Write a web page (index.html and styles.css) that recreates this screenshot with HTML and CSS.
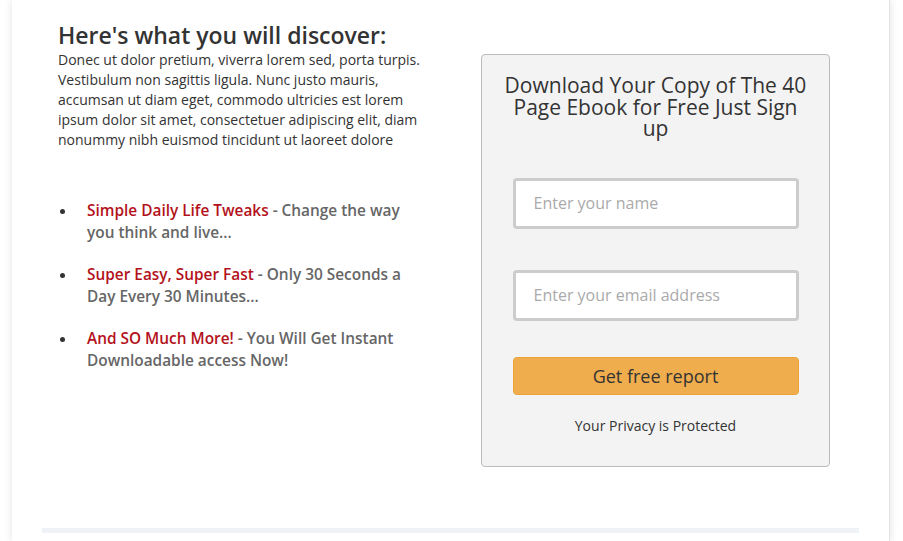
FILE: index.html
```html
<!DOCTYPE html>
<html>
<head>
<meta charset="utf-8">
<link rel="stylesheet" href="styles.css">
</head>
<body>
<div class="page">
  <div class="row">
    <div class="col-left">
      <h2 class="title">Here's what you will discover:</h2>
      <p class="intro">Donec ut dolor pretium, viverra lorem sed, porta turpis. Vestibulum non sagittis ligula. Nunc justo mauris, accumsan ut diam eget, commodo ultricies est lorem ipsum dolor sit amet, consectetuer adipiscing elit, diam nonummy nibh euismod tincidunt ut laoreet dolore</p>
      <ul class="points">
        <li><span class="dot"></span><span class="txt"><span class="hl">Simple Daily Life Tweaks</span> - Change the way you think and live...</span></li>
        <li><span class="dot"></span><span class="txt"><span class="hl">Super Easy, Super Fast</span> - Only 30 Seconds a Day Every 30 Minutes...</span></li>
        <li><span class="dot"></span><span class="txt"><span class="hl">And SO Much More!</span> - You Will Get Instant Downloadable access Now!</span></li>
      </ul>
    </div>
    <div class="optin">
      <h3 class="optin-title">Download Your Copy of The 40 Page Ebook for Free Just Sign up</h3>
      <form class="form">
        <input class="field" type="text" placeholder="Enter your name">
        <input class="field" type="email" placeholder="Enter your email address">
        <button class="btn" type="button">Get free report</button>
      </form>
      <p class="privacy">Your Privacy is Protected</p>
    </div>
  </div>
  <div class="bar"></div>
</div>
</body>
</html>
```
FILE: styles.css
```css
html, body {
  margin: 0;
  padding: 0;
  background: #fff;
}
body {
  font-family: "Open Sans", "Liberation Sans", sans-serif;
  color: #333;
}
.page {
  margin: 0 13px 0 12px;
  min-height: 541px;
  background: #fff;
  box-shadow: 0 0 8px rgba(0, 0, 0, 0.12);
  border-right: 1px solid #e4e4e4;
  box-sizing: border-box;
  padding-top: 21px;
  overflow: hidden;
}
.row {
  display: flex;
  align-items: flex-start;
}
.col-left {
  margin-left: 46px;
  width: 372px;
}
.title {
  margin: 0;
  font-size: 23px;
  font-weight: 600;
  line-height: 29px;
  color: #333;
}
.intro {
  margin: 0;
  font-size: 14px;
  line-height: 20px;
  color: #333;
}
.points {
  margin: 50px 0 0 0;
  padding: 0;
  list-style: none;
}
.points li {
  display: flex;
  align-items: flex-start;
  margin-bottom: 20px;
}
.dot {
  flex: none;
  width: 5px;
  height: 5px;
  border-radius: 50%;
  background: #333;
  margin: 9px 22px 0 2px;
}
.txt {
  font-size: 15.4px;
  font-weight: 600;
  line-height: 22px;
  color: #666;
}
.hl {
  color: #b3121b;
}
.optin {
  margin-left: 51px;
  margin-top: 33px;
  width: 349px;
  height: 413px;
  box-sizing: border-box;
  background: #f3f3f3;
  border: 1px solid #bbb;
  border-radius: 4px;
  padding: 20px 20px 0;
}
.optin-title {
  margin: 0;
  font-size: 21px;
  font-weight: 400;
  line-height: 21.5px;
  text-align: center;
  color: #333;
}
.form {
  display: flex;
  flex-direction: column;
  align-items: center;
  margin-top: 38px;
}
.field {
  width: 286px;
  height: 51px;
  box-sizing: border-box;
  border: 3px solid #ccc;
  border-radius: 4px;
  background: #fff;
  padding: 0 18px;
  font-family: "Open Sans", "Liberation Sans", sans-serif;
  font-size: 16px;
  color: #555;
  margin-bottom: 41px;
  outline: none;
}
.field::placeholder {
  color: #aaa;
}
.field + .field {
  margin-bottom: 36px;
}
.btn {
  width: 286px;
  height: 38px;
  box-sizing: border-box;
  background: #f0ad4e;
  border: 1px solid #eea236;
  border-radius: 4px;
  font-family: "Open Sans", "Liberation Sans", sans-serif;
  font-size: 18px;
  color: #333;
  padding: 0;
}
.privacy {
  margin: 21px 0 0;
  text-align: center;
  font-size: 14px;
  line-height: 20px;
  color: #333;
}
.bar {
  margin: 61px 30px 0;
  height: 5px;
  background: #eff3f8;
}
```
